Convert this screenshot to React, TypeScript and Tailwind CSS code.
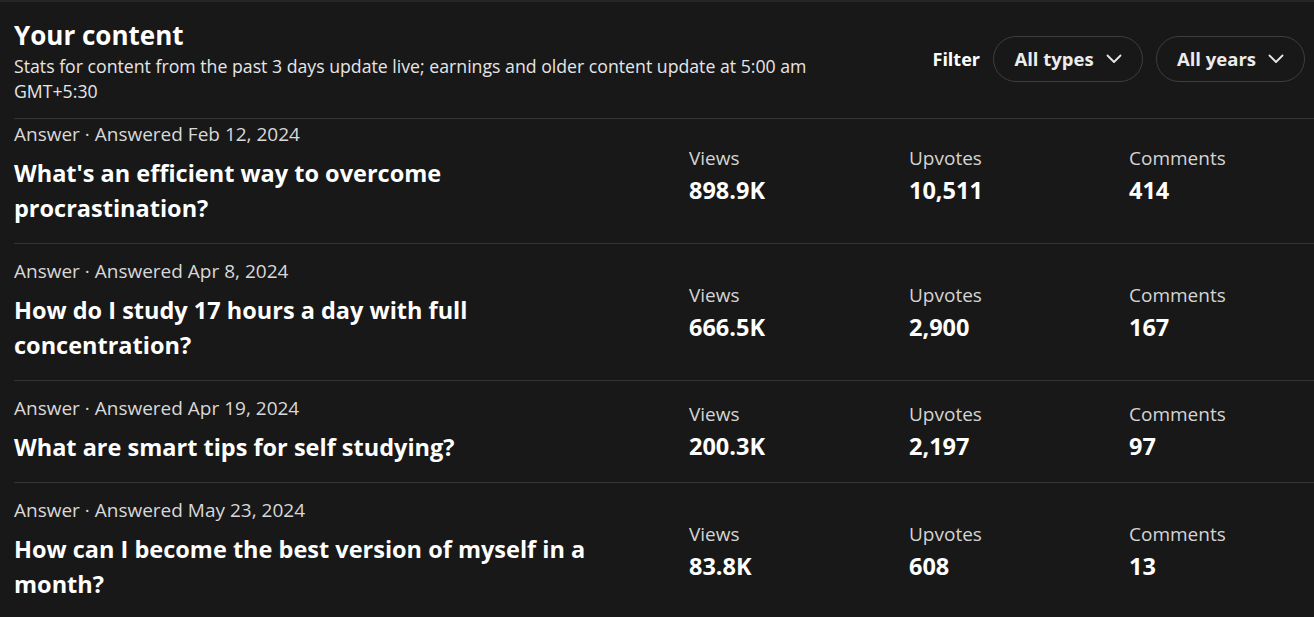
import React from "react";

const rows = [
  { date: "Feb 12, 2024", title: "What's an efficient way to overcome procrastination?", views: "898.9K", upvotes: "10,511", comments: "414" },
  { date: "Apr 8, 2024", title: "How do I study 17 hours a day with full concentration?", views: "666.5K", upvotes: "2,900", comments: "167" },
  { date: "Apr 19, 2024", title: "What are smart tips for self studying?", views: "200.3K", upvotes: "2,197", comments: "97" },
  { date: "May 23, 2024", title: "How can I become the best version of myself in a month?", views: "83.8K", upvotes: "608", comments: "13" },
];

function Chevron() {
  return (
    <svg width="16" height="10" viewBox="0 0 16 10" fill="none" className="ml-3">
      <path d="M1.5 1.5 L8 8 L14.5 1.5" stroke="#e8e8e8" strokeWidth="1.8" strokeLinecap="round" strokeLinejoin="round" />
    </svg>
  );
}

function Stat({ label, value, last }: { label: string; value: string; last?: boolean }) {
  return (
    <div className={`${last ? "flex-1" : "w-[220px] shrink-0"} flex flex-col`}>
      <div className="text-[19px] leading-[24px] text-[#d4d4d4]">{label}</div>
      <div className="text-[23.5px] leading-[24px] mt-[8px] font-bold text-white">{value}</div>
    </div>
  );
}

export default function App() {
  return (
    <div
      className="w-[1314px] h-[617px] overflow-hidden bg-[#181818] border-t-2 border-[#262626] text-white"
      style={{ fontFamily: '"Open Sans", "Noto Sans", sans-serif' }}
    >
      <div className="pl-[14px]">
        <div className="flex items-start justify-between border-b border-[#353535] pr-[9px] pt-[14px] pb-[14px]">
          <div className="flex flex-col">
            <div className="text-[26px] leading-[38px] font-bold">Your content</div>
            <div className="text-[17.7px] leading-[25px] text-[#e6e6e6] w-[820px]">
              Stats for content from the past 3 days update live; earnings and older content update at 5:00 am GMT+5:30
            </div>
          </div>
          <div className="flex items-center gap-[13px] mt-[20px]">
            <span className="text-[18px] font-bold">Filter</span>
            <button className="h-[46px] w-[150px] rounded-full border-[1.5px] border-[#3e3e3e] flex items-center justify-center text-[18.5px] font-bold text-[#ececec]">
              All types
              <Chevron />
            </button>
            <button className="h-[46px] w-[149px] rounded-full border-[1.5px] border-[#3e3e3e] flex items-center justify-center text-[18.5px] font-bold text-[#ececec]">
              All years
              <Chevron />
            </button>
          </div>
        </div>
        {rows.map((r, i) => (
          <div
            key={i}
            className={`flex items-center border-b border-[#353535] ${i === 0 ? "pt-[2px]" : "pt-[14px]"} pb-[17px]`}
          >
            <div className="w-[596px] shrink-0 flex flex-col">
              <div className="text-[19px] leading-[26px] text-[#d8d8d8]">Answer · Answered {r.date}</div>
              <div className="text-[23.5px] leading-[35px] font-bold mt-[9px]">{r.title}</div>
            </div>
            <div className="flex flex-1 ml-[79px]">
              <Stat label="Views" value={r.views} />
              <Stat label="Upvotes" value={r.upvotes} />
              <Stat label="Comments" value={r.comments} last />
            </div>
          </div>
        ))}
      </div>
    </div>
  );
}
